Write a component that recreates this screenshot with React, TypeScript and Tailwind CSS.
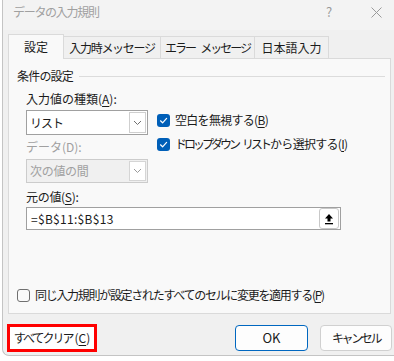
import React from "react";

const U = ({ c }: { c: string }) => <span className="underline underline-offset-2">{c}</span>;

function CheckBox({ checked }: { checked: boolean }) {
  if (checked) {
    return (
      <div className="w-[13px] h-[13px] rounded-[3px] bg-[#005fb8] flex items-center justify-center shrink-0">
        <svg width="9" height="9" viewBox="0 0 9 9">
          <path d="M1.5 4.8 L3.6 6.8 L7.6 2.4" fill="none" stroke="#fff" strokeWidth="1.2" strokeLinecap="round" strokeLinejoin="round" />
        </svg>
      </div>
    );
  }
  return <div className="w-[13px] h-[13px] rounded-[3px] border border-[#707070] bg-[#fafafa] shrink-0" />;
}

function Chevron({ color }: { color: string }) {
  return (
    <svg width="9" height="6" viewBox="0 0 9 6">
      <path d="M1 1 L4.5 4.5 L8 1" fill="none" stroke={color} strokeWidth="1" />
    </svg>
  );
}

export default function App() {
  return (
    <div className="w-[394px] h-[361px] bg-white overflow-hidden text-[12px] text-[#1b1b1b] tracking-[-0.3px] font-['Noto_Sans_CJK_JP','Noto_Sans',sans-serif]">
      <div className="ml-[2px] w-[392px] h-[356px] bg-[#f0f0f0] border-l border-b border-[#c4c4c4] rounded-bl-[7px] flex flex-col">
        {/* Title bar */}
        <div className="h-[30px] bg-[#f3f3f3] flex items-start justify-between pt-[4px]">
          <div className="pl-[10px] leading-[16px] text-[12px] tracking-[-1.3px] text-[#a0a0a0]">データの入力規則</div>
          <div className="flex items-start">
            <div className="w-[16px] text-center leading-[16px] text-[13px] text-[#9a9a9a]">?</div>
            <div className="ml-[31px] mr-[10px] w-[16px] h-[16px] flex items-center justify-center">
              <svg width="11" height="11" viewBox="0 0 11 11">
                <path d="M0.5 0.5 L10.5 10.5 M10.5 0.5 L0.5 10.5" stroke="#9a9a9a" strokeWidth="1" />
              </svg>
            </div>
          </div>
        </div>

        {/* Tabs */}
        <div className="mt-[4px] pl-[5px] flex items-end h-[24px]">
          <div className="relative z-10 -mb-px w-[56px] h-[25px] bg-[#f9f9f9] border border-b-0 border-[#dadada] flex items-center justify-center pb-[1px] tracking-normal">
            設定
          </div>
          <div className="w-[97px] h-[22px] bg-[#f0f0f0] border-t border-r border-[#dadada] flex items-center justify-center tracking-[-1.3px]">
            入力時メッセージ
          </div>
          <div className="w-[94px] h-[22px] bg-[#f0f0f0] border-t border-r border-[#dadada] flex items-center justify-center tracking-[-2px]">
            <span>エラー</span>
            <span className="ml-[5px]">メッセージ</span>
          </div>
          <div className="w-[74px] h-[22px] bg-[#f0f0f0] border-t border-r border-[#dadada] flex items-center justify-center tracking-normal">
            日本語入力
          </div>
        </div>

        {/* Panel */}
        <div className="ml-[5px] w-[383px] h-[256px] bg-[#f9f9f9] border border-[#dadada] flex flex-col">
          <div className="mt-[9px] pl-[8px] flex items-center h-[16px]">
            <span className="leading-[16px] tracking-[-0.8px]">条件の設定</span>
            <div className="flex-1 h-px bg-[#dcdcdc] ml-[6px] mr-[5px]" />
          </div>

          <div className="pl-[17px] mt-[7px] flex flex-col">
            <div className="h-[16px] leading-[16px] tracking-normal">
              入力値の種類(<U c="A" />):
            </div>
            <div className="mt-[3px] flex">
              <div className="w-[122px] flex flex-col">
                <div className="h-[25px] bg-white border border-[#a0a0a0] flex items-stretch">
                  <div className="flex-1 pl-[3px] flex items-center tracking-[-1px]">リスト</div>
                  <div className="w-[17px] my-px mr-px border border-[#cfcfcf] bg-white flex items-center justify-center">
                    <Chevron color="#707070" />
                  </div>
                </div>
                <div className="mt-[4px] h-[16px] leading-[16px] text-[#a0a0a0] tracking-normal">データ(D):</div>
                <div className="mt-[4px] h-[24px] bg-[#f0f0f0] border border-[#cccccc] flex items-stretch">
                  <div className="flex-1 pl-[3px] flex items-center text-[#a0a0a0]">次の値の間</div>
                  <div className="w-[17px] my-px mr-px border border-[#d5d5d5] bg-white flex items-center justify-center">
                    <Chevron color="#9a9a9a" />
                  </div>
                </div>
              </div>
              <div className="ml-[9px] pt-[2px] flex flex-col gap-[8px]">
                <div className="h-[16px] flex items-center gap-[5px]">
                  <CheckBox checked />
                  <span className="leading-[16px] tracking-[-0.7px]">
                    空白を無視する(<U c="B" />)
                  </span>
                </div>
                <div className="h-[16px] flex items-center gap-[5px]">
                  <CheckBox checked />
                  <span className="leading-[16px] flex">
                    <span className="tracking-[-3px]">ドロップダウン</span>
                    <span className="ml-[4px] tracking-[-3px]">リスト</span>
                    <span className="ml-[1px] tracking-[-0.7px]">
                      から選択する(<U c="I" />)
                    </span>
                  </span>
                </div>
              </div>
            </div>
            <div className="mt-[6px] h-[16px] leading-[16px]">
              元の値(<U c="S" />):
            </div>
            <div className="mt-[2px] w-[315px] h-[23px] bg-white border border-[#a0a0a0] flex items-center">
              <div className="flex-1 pl-[4px] tracking-[0.3px]">=$B$11:$B$13</div>
              <div className="w-[20px] h-[21px] mr-px border border-[#c8c8c8] rounded-[3px] bg-white flex items-center justify-center">
                <svg width="10" height="12" viewBox="0 0 10 12">
                  <path d="M5 1 L9 5.5 L6.5 5.5 L6.5 8.5 L3.5 8.5 L3.5 5.5 L1 5.5 Z" fill="#000" />
                  <rect x="1" y="10" width="8" height="1.3" fill="#000" />
                </svg>
              </div>
            </div>
          </div>

          <div className="mt-auto mb-[10px] pl-[8px] h-[16px] flex items-center gap-[5px]">
            <CheckBox checked={false} />
            <span className="leading-[16px] tracking-[-1.3px]">
              同じ入力規則が設定されたすべてのセルに変更を適用する(<U c="P" />)
            </span>
          </div>
        </div>

        {/* Buttons */}
        <div className="mt-[10px] flex items-center">
          <div className="ml-[4px] w-[90px] h-[28px] border-[3px] border-[#ff0000] bg-white flex items-center justify-center">
            <span className="tracking-[-2px]">すべてクリア</span>
            <span className="ml-[2px] tracking-normal">
              (<U c="C" />)
            </span>
          </div>
          <div className="ml-auto w-[73px] h-[26px] border border-[#0067c0] rounded-[4px] bg-[#fdfdfd] flex items-center justify-center text-[13px] tracking-normal">
            OK
          </div>
          <div className="ml-[12px] mr-[2px] w-[72px] h-[26px] border border-[#d0d0d0] rounded-[4px] bg-[#fdfdfd] flex items-center justify-center tracking-[-2.4px]">
            キャンセル
          </div>
        </div>
      </div>
    </div>
  );
}
